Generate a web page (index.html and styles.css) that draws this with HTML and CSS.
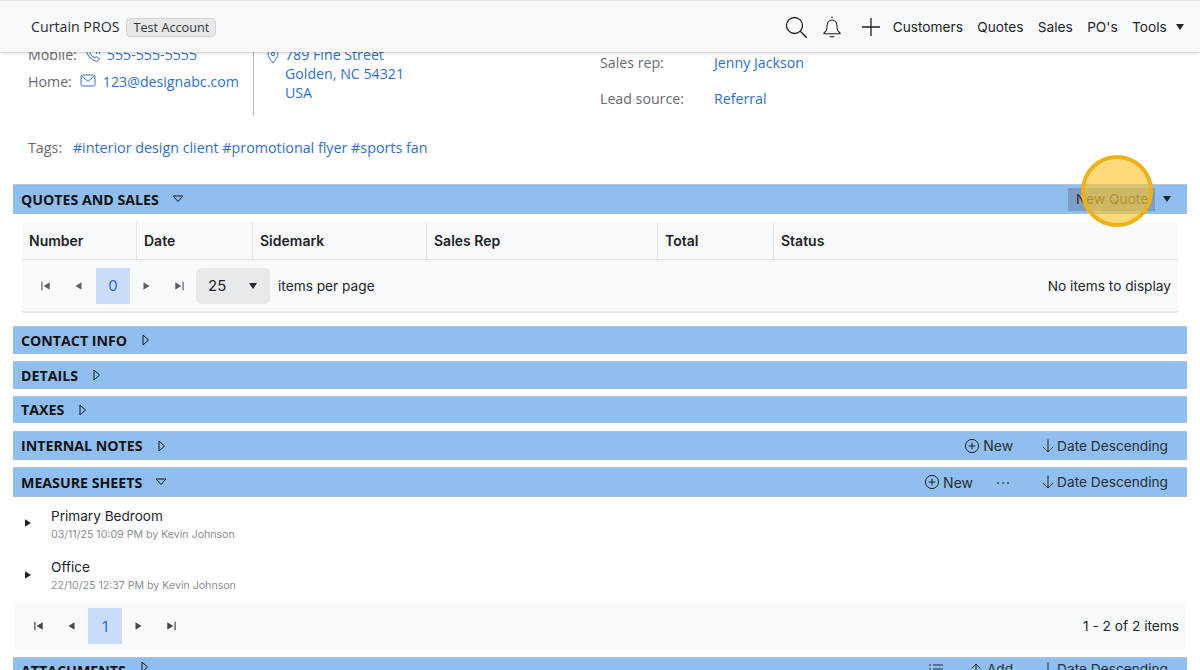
FILE: index.html
```html
<!DOCTYPE html>
<html lang="en">
<head>
<meta charset="utf-8">
<title>Curtain PROS</title>
<link rel="stylesheet" href="styles.css">
</head>
<body>
<svg class="defs" width="0" height="0" aria-hidden="true">
  <symbol id="first" viewBox="0 0 10 10"><path d="M1.500 1.500h1v7h-1z"/><path d="M8.500 1.800v6.400L3.500 5z"/></symbol>
  <symbol id="prev" viewBox="0 0 10 10"><path d="M7.500 1.800v6.400L2.500 5z"/></symbol>
  <symbol id="next" viewBox="0 0 10 10"><path d="M2.500 1.800v6.400L7.500 5z"/></symbol>
  <symbol id="last" viewBox="0 0 10 10"><path d="M8.500 1.500h-1v7h1z"/><path d="M1.500 1.800v6.400L6.500 5z"/></symbol>
  <symbol id="plus-c" viewBox="0 0 16 16"><circle cx="8" cy="8" r="6.600" fill="none" stroke="currentColor"/><path d="M8 4.600v6.800M4.600 8h6.800" fill="none" stroke="currentColor"/></symbol>
  <symbol id="arrow-d" viewBox="0 0 14 16"><path d="M7 1.500v12.500M1.800 8.800 7 14l5.200-5.200" fill="none" stroke="currentColor"/></symbol>
</svg>

<header class="topbar">
  <div class="brand">
    <span class="brand-name">Curtain PROS</span>
    <span class="badge">Test Account</span>
  </div>
  <nav class="nav">
    <svg class="ico-search" width="24" height="24" viewBox="0 0 24 24"><circle cx="10.500" cy="10.500" r="8" fill="none" stroke="#222" stroke-width="1.300"/><path d="m16.300 16.300 6.400 6.400" stroke="#222" stroke-width="1.400"/></svg>
    <svg class="ico-bell" width="20" height="24" viewBox="0 0 20 24"><path d="M10 1.500v1.700M3.600 16.500c1.200-1.600 1.500-3 1.500-5.700 0-3.300 2-5.800 4.900-5.800s4.900 2.500 4.900 5.800c0 2.700.3 4.100 1.500 5.700l1.600 1.600v.6H2v-.6z M7.800 21c.8 1.300 3.600 1.300 4.400 0" fill="none" stroke="#222" stroke-width="1.100"/></svg>
    <svg class="ico-plus" width="20" height="20" viewBox="0 0 20 20"><path d="M10 1v18M1 10h18" stroke="#222" stroke-width="1.300"/></svg>
    <a class="nav-link nav-first">Customers</a>
    <a class="nav-link">Quotes</a>
    <a class="nav-link">Sales</a>
    <a class="nav-link">PO's</a>
    <a class="nav-link">Tools</a>
    <span class="caret caret-tools"></span>
  </nav>
</header>

<main class="content">
  <section class="summary">
    <div class="contacts">
      <div class="contact-line">
        <span class="label">Mobile:</span>
        <svg class="ico-phone" width="16" height="16" viewBox="0 0 16 16"><path d="M2 2.500 4.200 1.200l2 3.100-1.400 1.300c.6 2 2.700 4.500 5 5.300l1.400-1.300 3.200 2-1.400 2.100c-.5.6-1.400.6-2.300.3C6 12.500 3 9.500 1.700 5c-.3-1-.2-2 .3-2.500zM9 1.500a5.500 5.500 0 0 1 5.500 5.500M9 4a3 3 0 0 1 3 3" fill="none" stroke="#2f6fcb"/></svg>
        <a class="link">555-555-5555</a>
      </div>
      <div class="contact-line">
        <span class="label">Home:</span>
        <svg class="ico-mail" width="16" height="13" viewBox="0 0 16 13"><rect x="1" y="1" width="14" height="11" rx="1.500" fill="none" stroke="#2f6fcb"/><path d="m1.500 2 6.500 5.500L14.500 2" fill="none" stroke="#2f6fcb"/></svg>
        <a class="link">123@designabc.com</a>
      </div>
    </div>
    <div class="address">
      <svg class="ico-pin" width="12" height="16" viewBox="0 0 12 16"><path d="M6 15C3 11 1 8.500 1 6a5 5 0 0 1 10 0c0 2.500-2 5-5 9z" fill="none" stroke="#2f6fcb"/><circle cx="6" cy="6" r="1.700" fill="none" stroke="#2f6fcb"/></svg>
      <a class="link addr-text">789 Fine Street<br>Golden, NC 54321<br>USA</a>
    </div>
    <dl class="meta">
      <div class="meta-row"><dt class="label">Sales rep:</dt><dd><a class="link">Jenny Jackson</a></dd></div>
      <div class="meta-row"><dt class="label">Lead source:</dt><dd><a class="link">Referral</a></dd></div>
    </dl>
  </section>

  <div class="tags">
    <span class="label">Tags:</span>
    <a class="link">#interior design client #promotional flyer #sports fan</a>
  </div>

  <div class="bar bar-quotes">
    <h2 class="bar-title">QUOTES AND SALES</h2>
    <svg class="tri" width="12" height="12" viewBox="0 0 12 12"><path d="M1 3h10L6 8.500z" fill="none" stroke="#111"/></svg>
    <div class="bar-actions">
      <span class="new-quote">New Quote</span>
      <span class="caret caret-quote"></span>
    </div>
  </div>

  <div class="grid-wrap">
    <div class="grid-head">
      <div class="th w-number">Number</div>
      <div class="th w-date">Date</div>
      <div class="th w-side">Sidemark</div>
      <div class="th w-rep">Sales Rep</div>
      <div class="th w-total">Total</div>
      <div class="th w-status">Status</div>
    </div>
    <div class="pager pager-grid">
      <svg class="pg pg-dim"><use href="#first"/></svg>
      <svg class="pg pg-dim"><use href="#prev"/></svg>
      <span class="page-num">0</span>
      <svg class="pg pg-dim"><use href="#next"/></svg>
      <svg class="pg pg-dim"><use href="#last"/></svg>
      <span class="per-page"><span>25</span><span class="caret"></span></span>
      <span class="per-label">items per page</span>
      <span class="pager-info">No items to display</span>
    </div>
  </div>

  <div class="bar bar-contact"><h2 class="bar-title">CONTACT INFO</h2><svg class="tri" width="12" height="12" viewBox="0 0 12 12"><path d="M3 1v10l5.500-5z" fill="none" stroke="#111"/></svg></div>
  <div class="bar bar-details"><h2 class="bar-title">DETAILS</h2><svg class="tri" width="12" height="12" viewBox="0 0 12 12"><path d="M3 1v10l5.500-5z" fill="none" stroke="#111"/></svg></div>
  <div class="bar bar-taxes"><h2 class="bar-title">TAXES</h2><svg class="tri" width="12" height="12" viewBox="0 0 12 12"><path d="M3 1v10l5.500-5z" fill="none" stroke="#111"/></svg></div>
  <div class="bar bar-notes">
    <h2 class="bar-title">INTERNAL NOTES</h2><svg class="tri" width="12" height="12" viewBox="0 0 12 12"><path d="M3 1v10l5.500-5z" fill="none" stroke="#111"/></svg>
    <div class="bar-actions">
      <span class="act act-new"><svg class="act-ico"><use href="#plus-c"/></svg>New</span>
      <span class="act act-sort"><svg class="act-arrow"><use href="#arrow-d"/></svg>Date Descending</span>
    </div>
  </div>
  <div class="bar bar-measure">
    <h2 class="bar-title">MEASURE SHEETS</h2><svg class="tri" width="12" height="12" viewBox="0 0 12 12"><path d="M1 3h10L6 8.500z" fill="none" stroke="#111"/></svg>
    <div class="bar-actions">
      <span class="act act-new"><svg class="act-ico"><use href="#plus-c"/></svg>New</span>
      <span class="act-more">···</span>
      <span class="act act-sort act-sort-more"><svg class="act-arrow"><use href="#arrow-d"/></svg>Date Descending</span>
    </div>
  </div>

  <ul class="sheets">
    <li class="sheet">
      <svg class="sheet-arrow"><use href="#next"/></svg>
      <div><div class="sheet-name">Primary Bedroom</div><div class="sheet-sub">03/11/25 10:09 PM by Kevin Johnson</div></div>
    </li>
    <li class="sheet">
      <svg class="sheet-arrow"><use href="#next"/></svg>
      <div><div class="sheet-name">Office</div><div class="sheet-sub">22/10/25 12:37 PM by Kevin Johnson</div></div>
    </li>
  </ul>

  <div class="pager pager-sheets">
    <svg class="pg"><use href="#first"/></svg>
    <svg class="pg"><use href="#prev"/></svg>
    <span class="page-num">1</span>
    <svg class="pg"><use href="#next"/></svg>
    <svg class="pg"><use href="#last"/></svg>
    <span class="pager-info">1 - 2 of 2 items</span>
  </div>

  <div class="bar bar-attach">
    <h2 class="bar-title">ATTACHMENTS</h2><svg class="tri" width="12" height="12" viewBox="0 0 12 12"><path d="M3 1v10l5.500-5z" fill="none" stroke="#111"/></svg>
    <div class="bar-actions">
      <svg class="act-list" width="16" height="14" viewBox="0 0 16 14"><path d="M1 3h2M5 3h10M1 7h2M5 7h10M1 11h2M5 11h10" stroke="#222"/></svg>
      <span class="act act-add"><svg class="act-ico" viewBox="0 0 16 16"><path d="M8 14V3M3.500 7.500 8 3l4.500 4.500" fill="none" stroke="#222"/></svg>Add</span>
      <span class="act act-sort"><svg class="act-arrow"><use href="#arrow-d"/></svg>Date Descending</span>
    </div>
  </div>
</main>

<div class="spot" aria-hidden="true"></div>
</body>
</html>
```

FILE: styles.css
```css
* { box-sizing: border-box; }
html, body { margin: 0; height: 670px; overflow: hidden; background: #fff; }
body { font-family: "Inter", "Liberation Sans", sans-serif; color: #212529; position: relative; }
.defs { position: absolute; }
h2, dl, dd, ul { margin: 0; padding: 0; }
li { list-style: none; }

.topbar {
  position: relative; z-index: 5; height: 52px; padding: 0 16px 0 31px;
  display: flex; align-items: center; justify-content: space-between;
  background: #f8f9fb; border-top: 1px solid #dfe1e6;
  box-shadow: 0 1px 3px rgba(0,0,0,.22);
}
.brand { display: flex; align-items: center; gap: 7px; font-family: "Open Sans", sans-serif; }
.brand-name { font-size: 14.200px; color: #2a2c30; }
.badge {
  font-size: 12.700px; line-height: 17px; padding: 0 6px; height: 19px; margin-top: 1px;
  background: #e6e7e9; border: 1px solid #d4d5d8; border-radius: 4px; color: #33363a;
}
.nav { display: flex; align-items: center; }
.nav-link { font-size: 13.700px; color: #212529; margin-right: 14.300px; }
.nav-first { margin-left: 12px; }
.ico-search { margin-right: 14px; }
.ico-bell { margin-right: 19px; }
.caret {
  display: inline-block; width: 0; height: 0;
  border-left: 4px solid transparent; border-right: 4px solid transparent; border-top: 6px solid #212529;
}
.caret-tools { margin-left: -5px; }

.content { margin-top: -9px; padding: 0 13px; }

.summary { display: flex; height: 72px; font-family: "Open Sans", sans-serif; font-size: 14.200px; position: relative; }
.label { color: #666a70; }
.link { color: #2f6fcb; }
.contacts { width: 241px; padding: 0 0 0 15px; border-right: 1px solid #b8babd; }
.contact-line { display: flex; align-items: center; height: 27px; margin-top: -2px; }
.contact-line + .contact-line { margin-top: 0; }
.contact-line .label { margin-right: 8px; }
.ico-phone { margin: 0 6px 0 0; }
.ico-mail { margin: -2px 7px 0 0; }
.address { display: flex; width: 346px; padding: 2px 0 0 13px; line-height: 19px; }
.ico-pin { flex: none; margin: 3px 6px 0 0; }
.meta { padding-top: 10px; }
.meta-row { display: flex; height: 36px; }
.meta-row dt { width: 114px; }

.tags { font-family: "Open Sans", sans-serif; font-size: 14.300px; padding: 23px 0 0 15px; height: 69px; line-height: 20px; }
.tags .label { margin-right: 7px; }

.bar {
  display: flex; align-items: center; padding-left: 8px;
  background: #8fbff0; border-top: 1px solid #b2c4d8; border-bottom: 1px solid #a5bcd5;
}
.bar-title { font-family: "Open Sans", sans-serif; font-weight: 700; font-size: 14.200px; color: #111; margin-right: 13px; white-space: nowrap; }
.bar-quotes { height: 30px; }
.bar-contact { height: 28px; margin-top: 13px; }
.bar-details { height: 28px; margin-top: 7px; }
.bar-taxes { height: 27px; margin-top: 7px; }
.bar-notes { height: 29px; margin-top: 8px; }
.bar-measure { height: 30px; margin-top: 7px; }
.bar-attach { height: 30px; margin-top: 7px; align-items: flex-start; padding-top: 3px; }
.bar-actions { margin-left: auto; display: flex; align-items: center; font-size: 13.700px; color: #2a2d31; padding-right: 19px; }
.bar-quotes .bar-actions { padding-right: 16px; }
.new-quote { display: block; width: 87px; height: 23px; line-height: 23px; padding-left: 8px; background: #7c9dc4; }
.caret-quote { margin-left: 8px; }
.act { display: flex; align-items: center; }
.act-new { font-size: 14px; }
.act-ico { width: 16px; height: 16px; margin-right: 3px; color: #222; }
.act-arrow { width: 14px; height: 16px; margin-right: 2px; color: #222; }
.act-sort { margin-left: 28px; }
.act-sort-more { margin-left: 30px; }
.act-more { margin-left: 23px; letter-spacing: 1px; font-size: 14px; }
.act-list { margin-right: 24px; }

.grid-wrap { margin: 8px 9px 0; background: #f8f9fb; border-bottom: 2px solid #e8e9ec; }
.grid-head { display: flex; height: 38px; border-bottom: 1px solid #e3e5e8; }
.th { display: flex; align-items: center; padding-left: 7px; font-size: 14px; font-weight: 600; color: #1f2226; border-right: 1px solid #e3e5e8; }
.w-number { width: 115px; }
.w-date { width: 116px; }
.w-side { width: 174px; }
.w-rep { width: 231px; }
.w-total { width: 116px; }
.w-status { flex: 1; border-right: 0; }

.pager { display: flex; align-items: center; font-size: 13.700px; }
.pager-grid { height: 51px; padding-left: 7px; }
.pager-grid .page-num { margin-left: 1px; }
.pager-sheets { height: 48px; margin: 0 1px; background: #f8f9fb; padding-left: 8px; }
.pg { width: 33px; height: 12px; fill: #44474c; }
.pg-dim { fill: #5c5f65; }
.page-num {
  width: 34px; height: 36px; display: flex; align-items: center; justify-content: center;
  background: #c9dcf8; color: #2f6fcb; font-size: 15px;
}
.per-page {
  display: flex; align-items: center; justify-content: space-between; width: 74px; height: 36px;
  padding: 0 13px 0 12px; background: #e8e9ec; border-radius: 5px; font-size: 15px;
}
.per-label { margin-left: 8px; }
.pager-info { margin-left: auto; padding-right: 7px; }

.sheets { padding: 7px 0 0 0; height: 105px; }
.sheet { display: flex; align-items: center; height: 51.500px; padding-bottom: 10px; }
.sheet-arrow { width: 12px; height: 12px; margin: -3px 12px 0 9px; fill: #222; }
.sheet-name { font-size: 13.600px; line-height: 18px; color: #212529; margin-left: 5px; }
.sheet-sub { font-size: 10.600px; line-height: 16px; color: #8b8e93; margin: 2px 0 0 5px; }

.spot {
  position: absolute; left: 1081px; top: 155px; width: 72px; height: 72px; z-index: 6;
  border-radius: 50%; border: 4px solid #eeb116; background: rgba(250,198,50,.65);
}
```
